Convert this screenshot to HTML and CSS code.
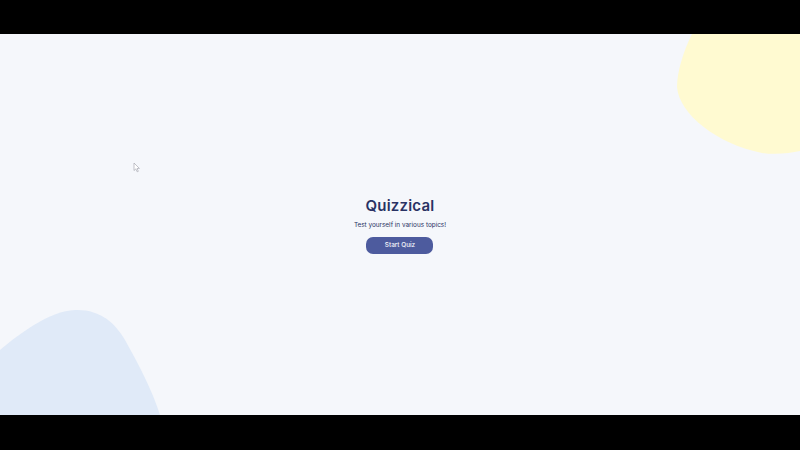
FILE: index.html
```html
<!DOCTYPE html>
<html lang="en">
<head>
<meta charset="utf-8">
<title>Quizzical</title>
<link rel="stylesheet" href="styles.css">
</head>
<body>
<div class="stage">
  <svg class="blob blob-yellow" viewBox="0 0 123 125" width="123" height="125" aria-hidden="true">
    <path d="M 15 0 C 6 18, 0 38, 0 53 C 2 80, 40 110, 85 119 C 100 121, 113 119, 123 117 L 123 0 Z" fill="#FFFAD1"/>
  </svg>
  <svg class="blob blob-blue" viewBox="0 0 170 110" width="170" height="110" aria-hidden="true">
    <path d="M 0 45 C 20 28, 50 6, 75 5 C 100 4, 115 18, 125 35 C 140 62, 152 85, 160 110 L 0 110 Z" fill="#E0EAF8"/>
  </svg>
  <svg class="cursor" viewBox="0 0 8 11" width="8" height="11" aria-hidden="true">
    <path d="M1 1 L1 8.5 L2.8 6.9 L4.2 9.8 L5.3 9.3 L4 6.5 L6.4 6.4 Z" fill="#fff" stroke="#9a9ca6" stroke-width="0.6"/>
  </svg>
  <main class="intro">
    <h1 class="title">Quizzical</h1>
    <p class="subtitle">Test yourself in various topics!</p>
    <button class="start-btn">Start Quiz</button>
  </main>
</div>
</body>
</html>
```
FILE: styles.css
```css
html, body {
  margin: 0;
  padding: 0;
  background: #000;
}
.stage {
  position: relative;
  margin-top: 34px;
  height: 381px;
  background: #F5F7FB;
  overflow: hidden;
  display: flex;
  align-items: center;
  justify-content: center;
  font-family: "Inter", "Open Sans", sans-serif;
}
.blob {
  position: absolute;
  display: block;
}
.blob-yellow {
  top: 0;
  right: 0;
}
.blob-blue {
  left: 0;
  bottom: 0;
}
.cursor {
  position: absolute;
  left: 133px;
  top: 128px;
}
.intro {
  display: flex;
  flex-direction: column;
  align-items: center;
}
.title {
  margin: 0;
  font-size: 15px;
  font-weight: 600;
  color: #293264;
  letter-spacing: 0.2px;
  line-height: 20px;
}
.subtitle {
  margin: 3px 0 0;
  font-size: 6.4px;
  color: #293264;
  line-height: 12px;
}
.start-btn {
  margin-top: 6px;
  width: 67px;
  height: 17px;
  border: none;
  border-radius: 7px;
  background: #4D5B9E;
  color: #F5F7FB;
  font-family: "Inter", "Open Sans", sans-serif;
  font-size: 6.4px;
  font-weight: 500;
  padding: 0;
}
```
